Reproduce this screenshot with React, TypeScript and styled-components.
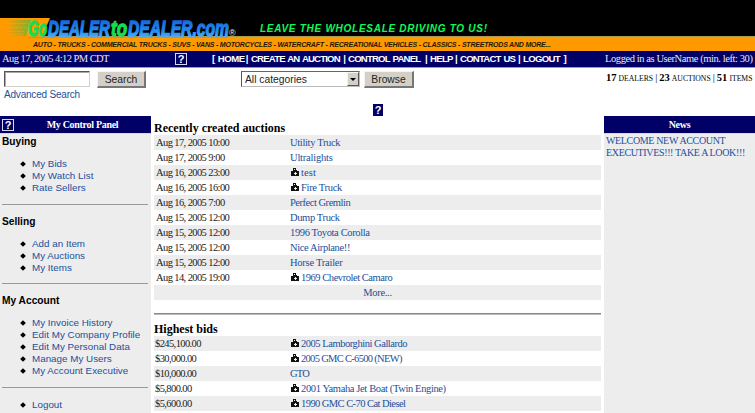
import React from 'react';
import styled, { createGlobalStyle } from 'styled-components';

const sans = '"Liberation Sans", Arial, sans-serif';
const serif = '"Liberation Serif", "Times New Roman", serif';
const navy = '#000066';
const link = '#1c4f9c';
const grey = '#ededed';

const GlobalStyle = createGlobalStyle`
  * { box-sizing: border-box; }
  body { margin: 0; background: #fff; overflow: hidden; }
`;

const Page = styled.div`
  width: 755px;
  height: 413px;
  overflow: hidden;
  display: flex;
  flex-direction: column;
  font-family: ${serif};
  font-size: 10.5px;
  color: #000;
  white-space: nowrap;
`;

const Banner = styled.svg`
  display: block;
  flex: none;
`;

const NavBar = styled.nav`
  flex: none;
  height: 17px;
  background: ${navy};
  border-bottom: 1px solid #9999bb;
  color: #e8e8f4;
  display: grid;
  grid-template-columns: 174px 37px 392px 1fr;
  align-items: center;
  line-height: 16px;
  padding-left: 1px;
`;

const Clock = styled.span`
  padding-left: 1px;
  letter-spacing: -0.55px;
`;

const Help = styled.span<{ $bordered?: boolean }>`
  flex: none;
  width: ${(p) => (p.$bordered ? 12 : 10)}px;
  height: 12px;
  background: ${navy};
  border: ${(p) => (p.$bordered ? '1px solid #d8d8ee' : '0')};
  color: #fff;
  font: bold 11px/${(p) => (p.$bordered ? 10 : 12)}px ${sans};
  text-align: center;
`;

const Menu = styled.span`
  display: flex;
  font: bold 9.6px/16px ${sans};
  word-spacing: 1px;
  color: #fff;
`;

const MenuItem = styled.span<{ $w: number; $ls?: number }>`
  width: ${(p) => p.$w}px;
  letter-spacing: ${(p) => p.$ls ?? -0.7}px;
  display: flex;
  justify-content: space-between;
  padding-right: 3px;
`;

const Session = styled.span`
  padding-left: 1px;
  letter-spacing: -0.42px;
`;

const Tools = styled.section`
  flex: none;
  height: 48px;
  display: grid;
  grid-template-columns: 241px 364px 1fr;
`;

const SearchBox = styled.div`
  display: flex;
  flex-wrap: wrap;
  align-content: flex-start;
  padding: 3px 0 0 4px;
`;

const Field = styled.input`
  width: 86px;
  height: 16px;
  margin-right: 7px;
  padding: 0 2px;
  background: #fff;
  border: 1px solid #d4d0c8;
  border-top: 1px solid #555;
  border-left: 1px solid #555;
  box-shadow: inset 1px 1px 0 #aaa;
  outline: 0;
`;

const Button = styled.button<{ $w: number }>`
  width: ${(p) => p.$w}px;
  height: 17px;
  padding: 0;
  background: #d4d0c8;
  border: 1px solid #f4f4f0;
  border-right: 2px solid #777;
  border-bottom: 2px solid #777;
  color: #222;
  font: 10.3px/13px ${sans};
`;

const Advanced = styled.a`
  flex-basis: 100%;
  color: ${link};
  font: 10px/14px ${sans};
  letter-spacing: -0.2px;
`;

const Categories = styled.div`
  display: flex;
  align-items: flex-start;
  gap: 4px;
  padding-top: 3px;
`;

const Select = styled.div`
  width: 119px;
  height: 16px;
  display: flex;
  justify-content: space-between;
  padding-left: 3px;
  border: 1px solid #bbb;
  border-top-color: #666;
  border-left: 1px solid #555;
  font: 10.3px/15px ${sans};
  color: #222;
`;

const Arrow = styled.span`
  width: 12px;
  height: 14px;
  background: #d4d0c8;
  border: 1px solid #f4f4f0;
  border-right-color: #555;
  border-bottom-color: #555;
  display: grid;
  place-items: center;
`;

const Triangle = styled.span`
  border: 3px solid transparent;
  border-top-color: #000;
  border-bottom: 0;
`;

const Stats = styled.div`
  padding: 3px 0 0 1px;
  font-size: 10.5px;
  line-height: 13px;
  word-spacing: -0.6px;
  small { font-size: 7.7px; }
`;

const Columns = styled.main`
  flex: 1;
  min-height: 0;
  display: grid;
  grid-template-columns: 151px 447px 151px;
  column-gap: 3px;
`;

const Side = styled.aside`
  background: ${grey};
  overflow: hidden;
`;

const PanelHead = styled.header<{ $help?: boolean }>`
  height: 18px;
  display: grid;
  grid-template-columns: ${(p) => (p.$help ? '14px 1fr 2px' : '1fr')};
  align-items: center;
  padding-left: ${(p) => (p.$help ? 2 : 0)}px;
  background: ${navy};
  border-bottom: 1px solid #d8d8e4;
  color: #fff;
  font-weight: bold;
  font-size: 10px;
  letter-spacing: -0.3px;
  text-align: center;
`;

const Group = styled.section<{ $h: number }>`
  height: ${(p) => p.$h}px;
  margin: 0 3px 0 2px;
  border-bottom: 1px solid #999;
  &:last-child { border-bottom: 0; }
`;

const GroupTitle = styled.h3<{ $top: number }>`
  margin: 0;
  padding: ${(p) => p.$top}px 0 10px;
  font: bold 10.2px/12px ${sans};
`;

const Links = styled.ul<{ $top?: number }>`
  list-style: none;
  margin: 0;
  padding: ${(p) => p.$top ?? 0}px 0 0 19px;
`;

const LinkItem = styled.li`
  height: 12px;
  display: flex;
  align-items: center;
  gap: 6px;
  color: ${link};
  font: 9.8px/12px ${sans};
  letter-spacing: 0.02px;
`;

const Bullet = styled.span`
  width: 4px;
  height: 4px;
  margin-right: 1px;
  background: #000;
  transform: rotate(45deg);
`;

const Center = styled.section`
  position: relative;
`;

const HelpSpot = styled.span`
  position: absolute;
  left: 219px;
  top: -12px;
  display: flex;
`;

const Title = styled.h2<{ $h: number }>`
  margin: 0;
  height: ${(p) => p.$h}px;
  display: flex;
  align-items: flex-end;
  font: bold 12px/14px ${serif};
`;

const Row = styled.div<{ $shade: boolean }>`
  height: 15px;
  line-height: 15px;
  display: grid;
  grid-template-columns: 134px 1fr;
  padding-left: 2px;
  background: ${(p) => (p.$shade ? grey : '#fff')};
`;

const Cell = styled.span<{ $pad?: number }>`
  margin-left: -${(p) => p.$pad ?? 0}px;
  font-size: 10.5px;
  letter-spacing: -0.6px;
  color: #222;
`;

const ItemLink = styled.a<{ $ls: number }>`
  color: ${link};
  font-size: 10.5px;
  letter-spacing: ${(p) => p.$ls}px;
  display: flex;
  align-items: center;
`;

const More = styled.div`
  height: 15px;
  background: ${grey};
  color: ${link};
  text-align: center;
  line-height: 15px;
  letter-spacing: -0.3px;
`;

const Divider = styled.hr`
  margin: 13px 0 0;
  height: 2px;
  border: 0;
  border-top: 1px solid #888;
  border-bottom: 1px solid #bbb;
`;

const News = styled.p`
  margin: 0;
  padding: 1px 0 0 2px;
  color: ${link};
  font-size: 10px;
  line-height: 12px;
  letter-spacing: -0.35px;
`;

const CameraIcon = styled.svg`
  flex: none;
  margin-top: -2px;
`;

const Camera = () => (
  <CameraIcon width="11" height="10" viewBox="0 0 11 10">
    <path d="M1 4h2V1h3v2h1v1h2v5H1z" fill="#111" />
    <path d="M4 2h1v1H4zM4 6h1V5h1v1h1v1H6v1H5V7H4z" fill="#eee" />
  </CameraIcon>
);

const Logo = () => (
  <Banner width="755" height="51" viewBox="0 0 755 51">
    <defs>
      <linearGradient id="blue" x2="0" y2="1">
        <stop offset="0.2" stopColor="#1769dc" />
        <stop offset="0.6" stopColor="#248cf0" />
        <stop offset="0.9" stopColor="#55b4ff" />
      </linearGradient>
      <linearGradient id="trail">
        <stop stopColor="#ff9900" />
        <stop offset="1" stopColor="#58b83a" />
      </linearGradient>
    </defs>
    <rect width="755" height="51" fill="#000" />
    <rect y="37" width="755" height="14" fill="#ff9900" />
    <path d="M0 36.5h755" stroke="#a99d50" />
    <path d="M0 18h50l-8 19H0z" fill="#ff9900" />
    <path d="M7 20h24l-5 16H9z" fill="url(#trail)" opacity="0.75" />
    <path d="M6 23.5h22M8 27.5h18M6 31.5h18M9 34.5h14" stroke="#ffa51c" strokeDasharray="3 1" opacity="0.6" />
    <path d="M29 37.3h198" stroke="#9c9c70" />
    <g fontFamily={sans} fontStyle="italic" fontWeight="bold">
      <g fontSize="22.5" strokeWidth="1.3">
        <text x="28" y="36" fill="#16de50" stroke="#16de50" textLength="19" lengthAdjust="spacingAndGlyphs">Go</text>
        <text x="48" y="36" fill="url(#blue)" stroke="url(#blue)" textLength="62" lengthAdjust="spacingAndGlyphs">DEALER</text>
        <text x="111" y="36" fill="#16de50" stroke="#16de50" textLength="16" lengthAdjust="spacingAndGlyphs">to</text>
        <text x="128" y="36" fill="url(#blue)" stroke="url(#blue)" textLength="101" lengthAdjust="spacingAndGlyphs">DEALER.com</text>
      </g>
      <text x="229" y="36" fontSize="9" fontStyle="normal" fontWeight="normal" fill="#eee">®</text>
      <text x="260" y="31.5" fontSize="10" fill="#10f85a" textLength="227">LEAVE THE WHOLESALE DRIVING TO US!</text>
      <text x="33" y="46.5" fontSize="7" fill="#251800" textLength="518">
        AUTO - TRUCKS - COMMERCIAL TRUCKS - SUVS - VANS - MOTORCYCLES - WATERCRAFT - RECREATIONAL VEHICLES - CLASSICS - STREETRODS AND MORE...
      </text>
    </g>
  </Banner>
);

type MenuEntry = { label: string; w: number; end: string; ls?: number };

const menu: MenuEntry[] = [
  { label: '[ HOME', w: 39, end: '|', ls: -0.5 },
  { label: 'CREATE AN AUCTION', w: 97, end: '|', ls: -0.83 },
  { label: 'CONTROL PANEL', w: 82, end: '|', ls: -0.8 },
  { label: 'HELP', w: 30, end: '|' },
  { label: 'CONTACT US', w: 63, end: '|', ls: -0.8 },
  { label: 'LOGOUT', w: 46, end: ']' },
];

const groups = [
  { title: 'Buying', height: 71, top: 2, links: ['My Bids', 'My Watch List', 'Rate Sellers'] },
  { title: 'Selling', height: 79, top: 11, links: ['Add an Item', 'My Auctions', 'My Items'] },
  {
    title: 'My Account',
    height: 104,
    top: 11,
    links: ['My Invoice History', 'Edit My Company Profile', 'Edit My Personal Data', 'Manage My Users', 'My Account Executive'],
  },
];

type Entry = { left: string; name: string; photo?: boolean; ls?: number };

const recent: Entry[] = [
  { left: 'Aug 17, 2005 10:00', name: 'Utility Truck', ls: -0.33 },
  { left: 'Aug 17, 2005 9:00', name: 'Ultralights', ls: -0.2 },
  { left: 'Aug 16, 2005 23:00', name: 'test', photo: true, ls: 0.1 },
  { left: 'Aug 16, 2005 16:00', name: 'Fire Truck', photo: true, ls: -0.3 },
  { left: 'Aug 16, 2005 7:00', name: 'Perfect Gremlin', ls: -0.48 },
  { left: 'Aug 15, 2005 12:00', name: 'Dump Truck' },
  { left: 'Aug 15, 2005 12:00', name: '1996 Toyota Corolla' },
  { left: 'Aug 15, 2005 12:00', name: 'Nice Airplane!!' },
  { left: 'Aug 15, 2005 12:00', name: 'Horse Trailer', ls: -0.25 },
  { left: 'Aug 14, 2005 19:00', name: '1969 Chevrolet Camaro', photo: true, ls: -0.46 },
];

const bids: Entry[] = [
  { left: '$245,100.00', name: '2005 Lamborghini Gallardo', photo: true, ls: -0.46 },
  { left: '$30,000.00', name: '2005 GMC C-6500 (NEW)', photo: true, ls: -0.69 },
  { left: '$10,000.00', name: 'GTO', ls: -0.8 },
  { left: '$5,800.00', name: '2001 Yamaha Jet Boat (Twin Engine)', photo: true },
  { left: '$5,600.00', name: '1990 GMC C-70 Cat Diesel', photo: true, ls: -0.56 },
];

const Rows = ({ items, pad }: { items: Entry[]; pad?: number }) => (
  <>
    {items.map((e, i) => (
      <Row key={i} $shade={i % 2 === 0}>
        <Cell $pad={pad}>{e.left}</Cell>
        <ItemLink $ls={e.ls ?? -0.37}>
          {e.photo && <Camera />}
          {e.name}
        </ItemLink>
      </Row>
    ))}
  </>
);

export default function App() {
  return (
    <Page>
      <GlobalStyle />
      <Logo />
      <NavBar>
        <Clock>Aug 17, 2005 4:12 PM CDT</Clock>
        <Help $bordered>?</Help>
        <Menu>
          {menu.map((m) => (
            <MenuItem key={m.label} $w={m.w} $ls={m.ls}>
              <span>{m.label}</span>
              <span>{m.end}</span>
            </MenuItem>
          ))}
        </Menu>
        <Session>Logged in as UserName (min. left: 30)</Session>
      </NavBar>
      <Tools>
        <SearchBox>
          <Field />
          <Button $w={49}>Search</Button>
          <Advanced>Advanced Search</Advanced>
        </SearchBox>
        <Categories>
          <Select>
            All categories
            <Arrow><Triangle /></Arrow>
          </Select>
          <Button $w={50}>Browse</Button>
        </Categories>
        <Stats>
          <b>17</b> <small>DEALERS</small> | <b>23</b> <small>AUCTIONS</small> | <b>51</b> <small>ITEMS</small>
        </Stats>
      </Tools>
      <Columns>
        <Side>
          <PanelHead $help>
            <Help $bordered>?</Help>
            <span>My Control Panel</span>
          </PanelHead>
          {groups.map((g) => (
            <Group key={g.title} $h={g.height}>
              <GroupTitle $top={g.top}>{g.title}</GroupTitle>
              <Links>
                {g.links.map((l) => (
                  <LinkItem key={l}><Bullet />{l}</LinkItem>
                ))}
              </Links>
            </Group>
          ))}
          <Group $h={25}>
            <Links $top={11}>
              <LinkItem><Bullet />Logout</LinkItem>
            </Links>
          </Group>
        </Side>
        <Center>
          <HelpSpot><Help>?</Help></HelpSpot>
          <Title $h={19}>Recently created auctions</Title>
          <Rows items={recent} />
          <More>More...</More>
          <Divider />
          <Title $h={21}>Highest bids</Title>
          <Rows items={bids} pad={1} />
        </Center>
        <Side>
          <PanelHead>
            <span>News</span>
          </PanelHead>
          <News>WELCOME NEW ACCOUNT<br />EXECUTIVES!!! TAKE A LOOK!!!</News>
        </Side>
      </Columns>
    </Page>
  );
}
